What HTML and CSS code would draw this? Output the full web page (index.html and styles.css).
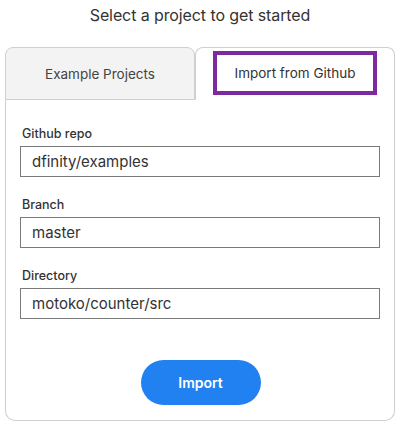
FILE: index.html
```html
<!DOCTYPE html>
<html>
<head>
<meta charset="utf-8">
<link rel="stylesheet" href="styles.css">
</head>
<body>
<div class="page">
  <h1 class="title">Select a project to get started</h1>
  <div class="card">
    <div class="tabs">
      <div class="tab tab-inactive">Example Projects</div>
      <div class="tab tab-active"><span class="tab-focus">Import from Github</span></div>
    </div>
    <div class="panel">
      <label class="field">
        <span class="field-label">Github repo</span>
        <input class="field-input" type="text" value="dfinity/examples">
      </label>
      <label class="field">
        <span class="field-label">Branch</span>
        <input class="field-input" type="text" value="master">
      </label>
      <label class="field">
        <span class="field-label">Directory</span>
        <input class="field-input" type="text" value="motoko/counter/src">
      </label>
      <div class="actions">
        <button class="import-btn">Import</button>
      </div>
    </div>
  </div>
</div>
</body>
</html>
```
FILE: styles.css
```css
* { box-sizing: border-box; }
html, body { margin: 0; padding: 0; background: #fff; }
body {
  font-family: Inter, "Noto Sans", "Liberation Sans", sans-serif;
  color: #333;
}
.page {
  width: 402px;
  padding: 4px 7px 0 5px;
}
.title {
  margin: 0;
  height: 43px;
  font-size: 16px;
  font-weight: 400;
  line-height: 22px;
  text-align: center;
  color: #333;
  letter-spacing: -0.1px;
}
.card {
  width: 390px;
}
.tabs {
  display: flex;
  height: 53px;
}
.tab {
  display: flex;
  align-items: center;
  justify-content: center;
  font-size: 13.5px;
  border: 1px solid #cfcfcf;
  border-radius: 8px 8px 0 0;
}
.tab-inactive {
  width: 190px;
  background: #f3f3f3;
  color: #444;
}
.tab-active {
  flex: 1;
  background: #fff;
  border-bottom: none;
  color: #333;
  padding-bottom: 2px;
}
.tab-focus {
  display: flex;
  align-items: center;
  justify-content: center;
  width: 164px;
  height: 44px;
  border: 4px solid #7d29a0;
}
.panel {
  display: flex;
  flex-direction: column;
  border: 1px solid #cfcfcf;
  border-top: none;
  border-radius: 0 0 10px 10px;
  padding: 26px 14px 15px 14px;
  height: 321px;
}
.field {
  display: flex;
  flex-direction: column;
  margin-bottom: 20px;
}
.field-label {
  font-size: 12.5px;
  font-weight: 500;
  line-height: 16px;
  margin-bottom: 4px;
  padding-left: 2px;
  color: #333;
}
.field-input {
  width: 360px;
  height: 31px;
  border: 1px solid #7a7a7a;
  border-radius: 0;
  padding: 0 11px;
  font-family: inherit;
  font-size: 15px;
  color: #333;
  background: #fff;
  outline: none;
}
.actions {
  display: flex;
  justify-content: center;
  margin-top: 21px;
}
.import-btn {
  width: 120px;
  height: 45px;
  border: none;
  border-radius: 23px;
  background: #2181f0;
  color: #fff;
  font-family: inherit;
  font-size: 14px;
  font-weight: 600;
  margin-left: 1px;
}
```
